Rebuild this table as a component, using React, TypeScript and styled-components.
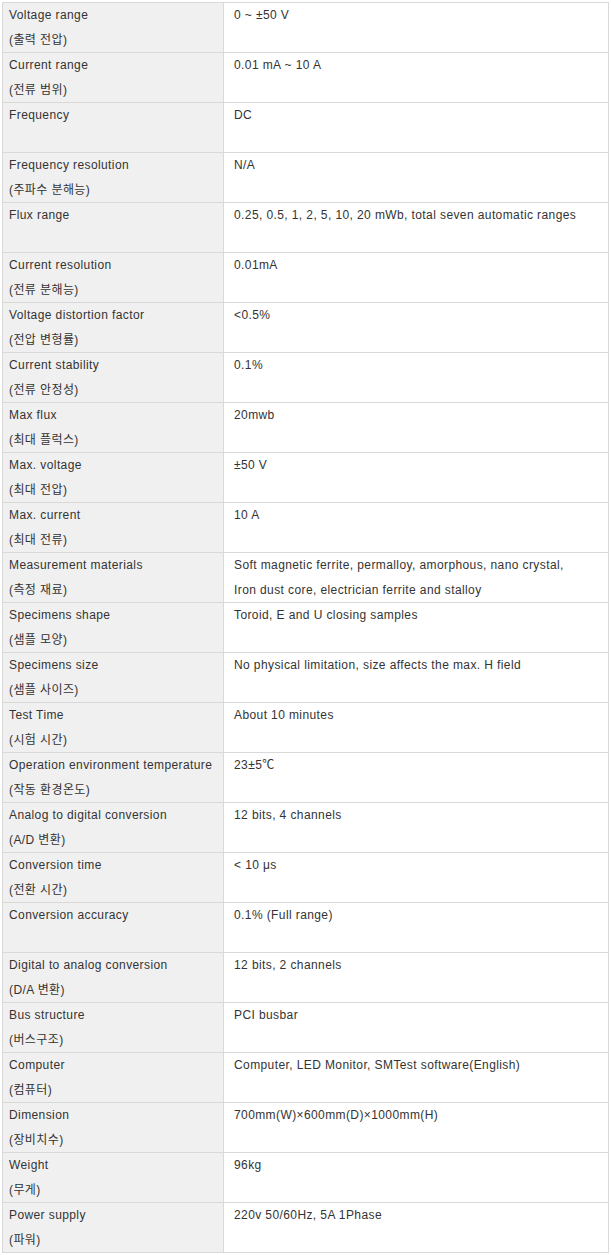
import * as React from "react";
import styled, { createGlobalStyle } from "styled-components";

interface ISpec {
    label: string;
    ko?: string;
    value: string[];
}

const specs: ISpec[] = [
    { label: "Voltage range", ko: "(출력 전압)", value: ["0 ~ ±50 V"] },
    { label: "Current range", ko: "(전류 범위)", value: ["0.01 mA ~ 10 A"] },
    { label: "Frequency", value: ["DC"] },
    { label: "Frequency resolution", ko: "(주파수 분해능)", value: ["N/A"] },
    { label: "Flux range", value: ["0.25, 0.5, 1, 2, 5, 10, 20 mWb, total seven automatic ranges"] },
    { label: "Current resolution", ko: "(전류 분해능)", value: ["0.01mA"] },
    { label: "Voltage distortion factor", ko: "(전압 변형률)", value: ["<0.5%"] },
    { label: "Current stability", ko: "(전류 안정성)", value: ["0.1%"] },
    { label: "Max flux", ko: "(최대 플럭스)", value: ["20mwb"] },
    { label: "Max. voltage", ko: "(최대 전압)", value: ["±50 V"] },
    { label: "Max. current", ko: "(최대 전류)", value: ["10 A"] },
    {
        label: "Measurement materials",
        ko: "(측정 재료)",
        value: ["Soft magnetic ferrite, permalloy, amorphous, nano crystal,", "Iron dust core, electrician ferrite and stalloy"],
    },
    { label: "Specimens shape", ko: "(샘플 모양)", value: ["Toroid, E and U closing samples"] },
    { label: "Specimens size", ko: "(샘플 사이즈)", value: ["No physical limitation, size affects the max. H field"] },
    { label: "Test Time", ko: "(시험 시간)", value: ["About 10 minutes"] },
    { label: "Operation environment temperature", ko: "(작동 환경온도)", value: ["23±5℃"] },
    { label: "Analog to digital conversion", ko: "(A/D 변환)", value: ["12 bits, 4 channels"] },
    { label: "Conversion time", ko: "(전환 시간)", value: ["< 10 μs"] },
    { label: "Conversion accuracy", value: ["0.1% (Full range)"] },
    { label: "Digital to analog conversion", ko: "(D/A 변환)", value: ["12 bits, 2 channels"] },
    { label: "Bus structure", ko: "(버스구조)", value: ["PCI busbar"] },
    { label: "Computer", ko: "(컴퓨터)", value: ["Computer, LED Monitor, SMTest software(English)"] },
    { label: "Dimension", ko: "(장비치수)", value: ["700mm(W)×600mm(D)×1000mm(H)"] },
    { label: "Weight", ko: "(무게)", value: ["96kg"] },
    { label: "Power supply", ko: "(파워)", value: ["220v 50/60Hz, 5A 1Phase"] },
];

const GlobalStyle = createGlobalStyle`
    body {
        margin: 0;
        background: #fff;
    }
`;

const Table = styled.table`
    margin: 2px 0 0 2px;
    width: 607px;
    table-layout: fixed;
    border-collapse: collapse;

    font-family: "Liberation Sans", "Noto Sans CJK KR", sans-serif;
    font-size: 12px;
    letter-spacing: 0.4px;
    color: #333;
`;

const Cell = styled.td<{ $head?: boolean }>`
    box-sizing: border-box;
    height: 50px;
    padding: 0 4px 0 ${(p) => (p.$head ? "6px" : "10px")};
    vertical-align: top;
    border: 1px solid #d9d9d9;
    background: ${(p) => (p.$head ? "#f0f0f0" : "#fff")};

    line-height: 24.5px;
    white-space: nowrap;
`;

const Line = styled.div``;

export default function App() {
    return (
        <>
            <GlobalStyle />
            <Table>
                <colgroup>
                    <col style={{ width: 221 }} />
                    <col />
                </colgroup>
                <tbody>
                    {specs.map((s, i) => (
                        <tr key={i}>
                            <Cell $head>
                                <Line>{s.label}</Line>
                                {s.ko && <Line>{s.ko}</Line>}
                            </Cell>
                            <Cell>
                                {s.value.map((v, j) => <Line key={j}>{v}</Line>)}
                            </Cell>
                        </tr>
                    ))}
                </tbody>
            </Table>
        </>
    );
}
